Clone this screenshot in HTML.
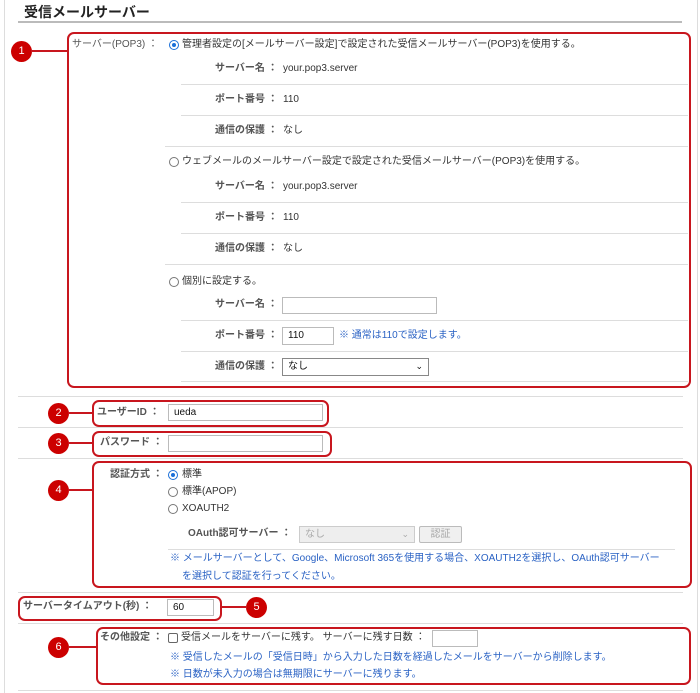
<!DOCTYPE html>
<html><head><meta charset="utf-8"><style>
*{margin:0;padding:0;box-sizing:border-box}
body{width:700px;height:693px;background:#fff;position:relative;overflow:hidden;font-family:"Liberation Sans","Noto Sans CJK JP",sans-serif;font-size:10px;color:#333}
.a{position:absolute;white-space:nowrap;line-height:12px}
.lb{color:#555;font-weight:bold}
.bl{color:#2a62c4}
.hr{position:absolute;height:1px;background:#ddd}
.box{position:absolute;border:2px solid #c8161e;border-radius:7px}
.c{position:absolute;width:21px;height:21px;border-radius:50%;background:#c00;color:#fff;font-size:11px;text-align:center;line-height:21px}
.ln{position:absolute;height:2px;background:#c8161e}
.in{position:absolute;border:1px solid #bbb;background:#fff;font-size:10px;padding-left:5px;line-height:15px;color:#111}
.r{position:absolute;width:10px;height:10px;border:1px solid #777;border-radius:50%;background:#fff}
.r.on{border-color:#1a6fd8}
.r.on:after{content:"";position:absolute;left:2px;top:2px;width:4px;height:4px;border-radius:50%;background:#1a6fd8}
</style></head><body>
<div style="position:absolute;left:4px;top:0;width:1px;height:693px;background:#ddd"></div>
<div style="position:absolute;left:697px;top:0;width:1px;height:693px;background:#ddd"></div>
<div class="a" style="left:24px;top:4px;font-size:14px;font-weight:bold;color:#222;line-height:16px">受信メールサーバー</div>
<div style="position:absolute;left:18px;top:21px;width:664px;height:2px;background:#bbb"></div>

<div class="box" style="left:67px;top:32px;width:624px;height:356px"></div>
<div class="c" style="left:11px;top:41px">1</div><div class="ln" style="left:31px;top:50px;width:37px"></div>
<div class="a" style="left:72px;top:39px;color:#555">サーバー(POP3) ：</div>
<div class="r on" style="left:169px;top:40px"></div>
<div class="a" style="left:182px;top:39px">管理者設定の[メールサーバー設定]で設定された受信メールサーバー(POP3)を使用する。</div>
<div class="a lb" style="left:215px;top:63px">サーバー名 ：</div><div class="a" style="left:283px;top:63px">your.pop3.server</div>
<div class="hr" style="left:181px;top:84px;width:507px"></div>
<div class="a lb" style="left:215px;top:94px">ポート番号 ：</div><div class="a" style="left:283px;top:94px">110</div>
<div class="hr" style="left:181px;top:115px;width:507px"></div>
<div class="a lb" style="left:215px;top:125px">通信の保護 ：</div><div class="a" style="left:283px;top:125px">なし</div>
<div class="hr" style="left:165px;top:146px;width:523px"></div>
<div class="r" style="left:169px;top:157px"></div>
<div class="a" style="left:182px;top:156px">ウェブメールのメールサーバー設定で設定された受信メールサーバー(POP3)を使用する。</div>
<div class="a lb" style="left:215px;top:181px">サーバー名 ：</div><div class="a" style="left:283px;top:181px">your.pop3.server</div>
<div class="hr" style="left:181px;top:202px;width:507px"></div>
<div class="a lb" style="left:215px;top:212px">ポート番号 ：</div><div class="a" style="left:283px;top:212px">110</div>
<div class="hr" style="left:181px;top:233px;width:507px"></div>
<div class="a lb" style="left:215px;top:243px">通信の保護 ：</div><div class="a" style="left:283px;top:243px">なし</div>
<div class="hr" style="left:165px;top:264px;width:523px"></div>
<div class="r" style="left:169px;top:277px"></div>
<div class="a" style="left:182px;top:276px">個別に設定する。</div>
<div class="a lb" style="left:215px;top:299px">サーバー名 ：</div><div class="in" style="left:282px;top:297px;width:155px;height:17px"></div>
<div class="hr" style="left:181px;top:320px;width:507px"></div>
<div class="a lb" style="left:215px;top:330px">ポート番号 ：</div><div class="in" style="left:282px;top:327px;width:52px;height:18px">110</div>
<div class="a bl" style="left:339px;top:330px">※ 通常は110で設定します。</div>
<div class="hr" style="left:181px;top:351px;width:507px"></div>
<div class="a lb" style="left:215px;top:361px">通信の保護 ：</div>
<div class="in" style="left:282px;top:358px;width:147px;height:18px;border-color:#888">なし<span style="position:absolute;right:5px;top:0;font-size:9px">&#8964;</span></div>
<div class="hr" style="left:181px;top:381px;width:507px"></div>

<div class="hr" style="left:18px;top:396px;width:665px"></div>
<div class="box" style="left:92px;top:400px;width:237px;height:27px"></div>
<div class="c" style="left:48px;top:403px">2</div><div class="ln" style="left:68px;top:412px;width:25px"></div>
<div class="a lb" style="left:97px;top:407px">ユーザーID ：</div>
<div class="in" style="left:168px;top:404px;width:155px;height:17px">ueda</div>
<div class="hr" style="left:18px;top:427px;width:665px"></div>
<div class="box" style="left:92px;top:431px;width:240px;height:26px"></div>
<div class="c" style="left:48px;top:433px">3</div><div class="ln" style="left:68px;top:442px;width:25px"></div>
<div class="a lb" style="left:100px;top:437px">パスワード ：</div>
<div class="in" style="left:168px;top:435px;width:155px;height:17px"></div>
<div class="hr" style="left:18px;top:458px;width:665px"></div>

<div class="box" style="left:92px;top:461px;width:600px;height:127px"></div>
<div class="c" style="left:48px;top:480px">4</div><div class="ln" style="left:68px;top:489px;width:25px"></div>
<div class="a lb" style="left:110px;top:469px">認証方式 ：</div>
<div class="r on" style="left:168px;top:470px"></div><div class="a" style="left:182px;top:469px">標準</div>
<div class="r" style="left:168px;top:487px"></div><div class="a" style="left:182px;top:486px">標準(APOP)</div>
<div class="r" style="left:168px;top:504px"></div><div class="a" style="left:182px;top:503px">XOAUTH2</div>
<div class="a lb" style="left:188px;top:528px">OAuth認可サーバー ：</div>
<div class="in" style="left:299px;top:526px;width:116px;height:17px;background:#eee;color:#aaa;border-color:#ccc">なし<span style="position:absolute;right:5px;top:0;font-size:9px">&#8964;</span></div>
<div class="in" style="left:419px;top:526px;width:43px;height:17px;background:#f0f0f0;color:#aaa;border-color:#bbb;border-radius:2px;padding:0;text-align:center">認証</div>
<div class="hr" style="left:168px;top:549px;width:507px"></div>
<div class="a bl" style="left:170px;top:553px">※ メールサーバーとして、Google、Microsoft 365を使用する場合、XOAUTH2を選択し、OAuth認可サーバー</div>
<div class="a bl" style="left:182px;top:571px">を選択して認証を行ってください。</div>
<div class="hr" style="left:18px;top:592px;width:665px"></div>

<div class="box" style="left:18px;top:596px;width:204px;height:25px"></div>
<div class="c" style="left:246px;top:597px">5</div><div class="ln" style="left:221px;top:606px;width:26px"></div>
<div class="a lb" style="left:23px;top:601px">サーバータイムアウト(秒) ：</div>
<div class="in" style="left:167px;top:599px;width:47px;height:17px">60</div>
<div class="hr" style="left:18px;top:623px;width:665px"></div>

<div class="box" style="left:96px;top:627px;width:595px;height:58px"></div>
<div class="c" style="left:48px;top:637px">6</div><div class="ln" style="left:68px;top:646px;width:29px"></div>
<div class="a lb" style="left:100px;top:632px">その他設定 ：</div>
<div style="position:absolute;left:168px;top:633px;width:10px;height:10px;border:1px solid #666;border-radius:2px"></div>
<div class="a" style="left:181px;top:632px">受信メールをサーバーに残す。 サーバーに残す日数 ：</div>
<div class="in" style="left:432px;top:630px;width:46px;height:17px"></div>
<div class="a bl" style="left:170px;top:652px">※ 受信したメールの「受信日時」から入力した日数を経過したメールをサーバーから削除します。</div>
<div class="a bl" style="left:170px;top:669px">※ 日数が未入力の場合は無期限にサーバーに残ります。</div>
<div class="hr" style="left:18px;top:690px;width:665px"></div>
</body></html>
